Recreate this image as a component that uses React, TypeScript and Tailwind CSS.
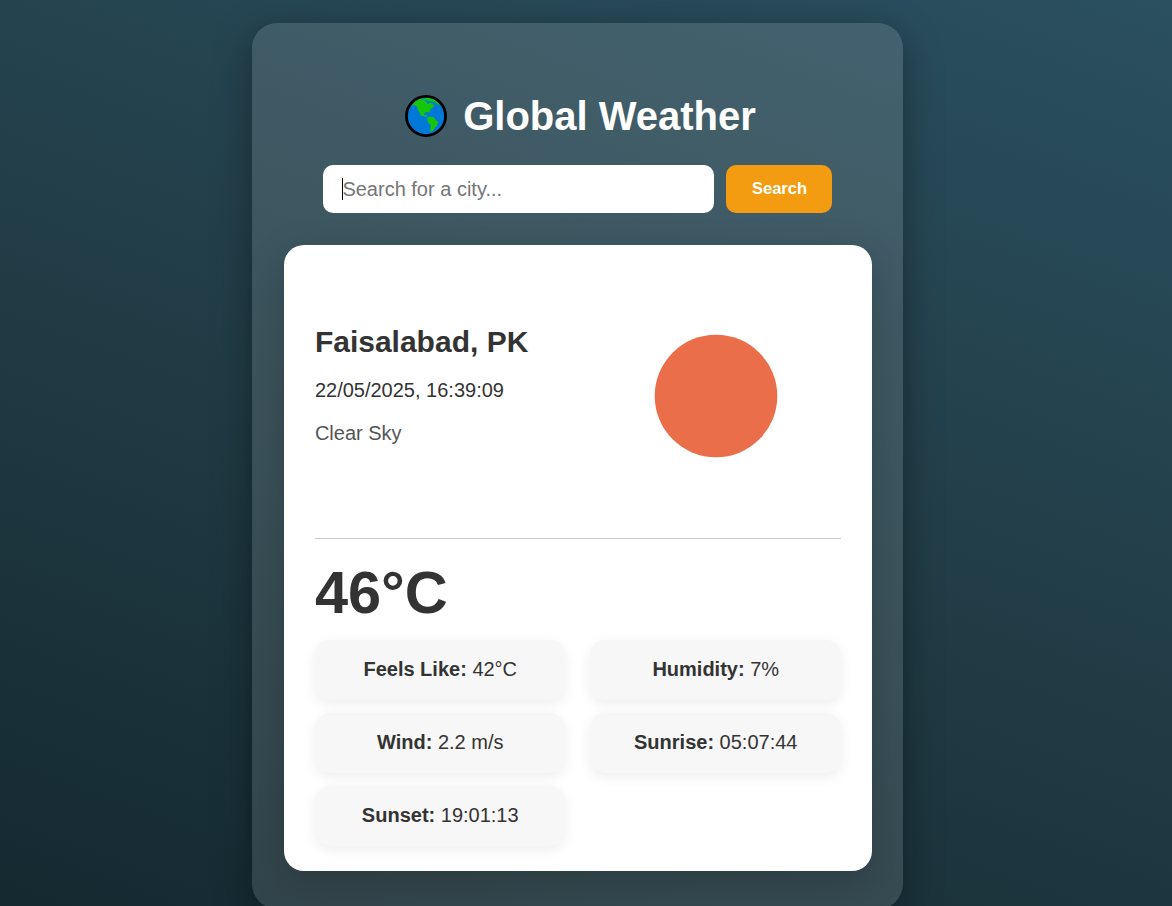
type Detail = { label: string; value: string };

const details: Detail[] = [
  { label: "Feels Like:", value: "42°C" },
  { label: "Humidity:", value: "7%" },
  { label: "Wind:", value: "2.2 m/s" },
  { label: "Sunrise:", value: "05:07:44" },
  { label: "Sunset:", value: "19:01:13" },
];

function Globe() {
  return (
    <svg viewBox="0 0 42 42" className="h-[42px] w-[42px] shrink-0" aria-hidden="true">
      <circle cx="21" cy="21" r="19.6" fill="#0078d7" />
      <g fill="#16c60c">
        <path d="M6 10.8 L10.5 6 L16 3.6 L19 5 L21.5 7 L22 8.5 L24 8.8 L24.8 7.2 L27 8.5 L29.8 11 L27.5 12.6 L25.8 14 L24.8 16 L24.3 18 L22.8 16.8 L19.8 17.5 L19 19.5 L20.3 20.2 L21.8 19.8 L22.2 22.3 L19.5 21.2 L15.8 20.7 L14.8 17.5 L13 15 L12 11.8 L10 10.3 Z" />
        <path d="M17.5 4.5 L21 3 L26 3 L31 4.8 L35.8 11 L32.5 9.2 L30.5 7.6 L28.5 7.2 L26.8 6.2 L22 5.8 Z" />
        <path d="M22.5 22.2 L25 21.7 L29.3 22.5 L30.5 25 L33.2 26.5 L32.2 30.3 L29.8 32.8 L27.5 36.2 L25 36.8 L25.4 34 L25.8 30 L23 27.5 L22.3 24.8 Z" />
      </g>
      <circle cx="21" cy="21" r="19.6" fill="none" stroke="#000" strokeWidth="2.8" />
    </svg>
  );
}

export default function App() {
  return (
    <div className="flex h-[906px] items-start justify-center overflow-hidden bg-[linear-gradient(20deg,#0f2027,#203a43,#2c5364)] bg-[length:100%_1310px] bg-[position:0_-115px] bg-no-repeat pt-[23px] pr-[17px] font-['Liberation_Sans',Arial,sans-serif] text-[#333]">
      <main className="flex h-[886px] w-[651px] shrink-0 flex-col items-center rounded-[25px] bg-white/12 px-8 pt-[69px] shadow-[0_10px_38px_rgba(0,0,0,0.35)]">
        <h1 className="flex h-12 items-center gap-4 pl-[6px] text-[40px] leading-[48px] font-bold text-white">
          <Globe />
          <span>Global Weather</span>
        </h1>
        <form className="mt-[25px] flex gap-3" onSubmit={(e) => e.preventDefault()}>
          <label className="flex h-12 w-[391px] items-center rounded-[10px] bg-white pl-[19px]">
            <span className="h-[22px] w-px bg-black" />
            <input
              placeholder="Search for a city..."
              className="-ml-px min-w-0 flex-1 bg-transparent pl-[0.4px] text-[20px] outline-none placeholder:text-[#757575]"
            />
          </label>
          <button className="h-12 w-[106px] rounded-[10px] bg-[#f39c12] pb-[2px] pl-px text-[16.5px] font-bold text-white">
            Search
          </button>
        </form>
        <section className="mt-8 h-[626px] w-[588px] rounded-[20px] bg-white px-[31px] shadow-[0_10px_38px_rgba(0,0,0,0.2)]">
          <header className="flex h-[294px] border-b border-[#ccc]">
            <div className="w-[277px] pt-[78px] pl-[0.4px]">
              <h2 className="text-[30px] leading-[38px] font-bold">Faisalabad, PK</h2>
              <p className="mt-[14px] text-[20px] leading-[30px]">22/05/2025, 16:39:09</p>
              <p className="mt-[13px] text-[20px] leading-[30px] text-[#555]">Clear Sky</p>
            </div>
            <div className="flex flex-1 justify-center pt-[89px]">
              <svg viewBox="0 0 124 124" className="h-[124px] w-[124px]" aria-hidden="true">
                <circle cx="62" cy="62" r="61.3" fill="#eb6e4b" />
              </svg>
            </div>
          </header>
          <p className="mt-[19px] pl-[0.4px] text-[59.5px] leading-[70px] font-bold">46°C</p>
          <div className="mt-[12px] grid grid-cols-2 gap-x-[25px] gap-y-[13px]">
            {details.map((d) => (
              <p
                key={d.label}
                className="h-[60px] rounded-[15px] bg-[#f7f7f7] pt-[14px] pl-px text-center text-[20px] leading-[30px] shadow-[0_4px_13px_rgba(0,0,0,0.07)]"
              >
                <strong>{d.label}</strong> {d.value}
              </p>
            ))}
          </div>
        </section>
      </main>
    </div>
  );
}
